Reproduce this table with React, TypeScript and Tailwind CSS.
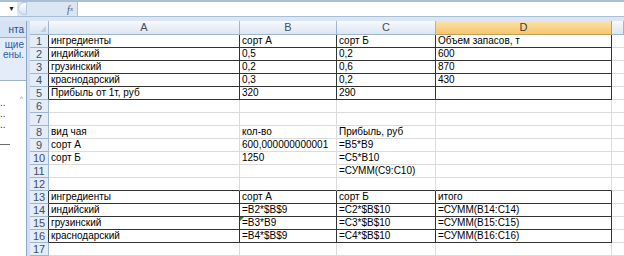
import React from "react";

type Row = {
  cells: string[];
  boxed?: boolean;
};

const ROWS: Row[] = [
  { cells: ["ингредиенты", "сорт А", "сорт Б", "Объем запасов, т"], boxed: true },
  { cells: ["индийский", "0,5", "0,2", "600"], boxed: true },
  { cells: ["грузинский", "0,2", "0,6", "870"], boxed: true },
  { cells: ["краснодарский", "0,3", "0,2", "430"], boxed: true },
  { cells: ["Прибыль от 1т, руб", "320", "290", ""], boxed: true },
  { cells: ["", "", "", ""] },
  { cells: ["", "", "", ""] },
  { cells: ["вид чая", "кол-во", "Прибыль, руб", ""] },
  { cells: ["сорт А", "600,000000000001", "=B5*B9", ""] },
  { cells: ["сорт Б", "1250", "=C5*B10", ""] },
  { cells: ["", "", "=СУММ(C9:C10)", ""] },
  { cells: ["", "", "", ""] },
  { cells: ["ингредиенты", "сорт А", "сорт Б", "итого"], boxed: true },
  { cells: ["индийский", "=B2*$B$9", "=C2*$B$10", "=СУММ(B14:C14)"], boxed: true },
  { cells: ["грузинский", "=B3*B9", "=C3*$B$10", "=СУММ(B15:C15)"], boxed: true },
  { cells: ["краснодарский", "=B4*$B$9", "=C4*$B$10", "=СУММ(B16:C16)"], boxed: true },
  { cells: ["", "", "", ""] },
];

const COLS = ["A", "B", "C", "D"];
const WIDTHS = ["w-[191px]", "w-[97px]", "w-[99px]", "w-[176px]"];

function ColHeader({ label, width, active }: { label: string; width: string; active?: boolean }) {
  return (
    <div
      className={`${width} flex h-full shrink-0 items-center justify-center border-r border-b text-[11px] ${
        active
          ? "border-[#c5a05a] bg-gradient-to-b from-[#fbe2ae] to-[#f6c568] text-[#3c3c3c]"
          : "border-[#9eb6ce] bg-gradient-to-b from-[#f7f9fc] to-[#dde6f1] text-[#3d4f66]"
      }`}
    >
      {label}
    </div>
  );
}

export default function App() {
  return (
    <div className="h-[256px] w-[624px] overflow-hidden bg-white font-['Liberation_Sans',Arial,sans-serif] text-black">
      {/* formula bar */}
      <div className="flex h-[21px] flex-col border-t-[2px] border-[#a9bfd8] bg-[#dbe6f4]">
        <div className="flex h-[14px] items-stretch">
          <div className="flex w-[17px] items-center justify-end bg-white pr-[2px] text-[7px] text-[#222]">▼</div>
          <div className="ml-[1px] h-[13px] w-[9px] rounded-l-full border border-[#b7c8dc] bg-gradient-to-b from-white to-[#d7e2ef]" />
          <div className="flex w-[50px] items-center justify-end pr-[4px] font-['Liberation_Serif',serif] text-[10px] italic text-[#4d5b70]">
            f<span className="text-[7px]">x</span>
          </div>
          <div className="flex-1 border-l border-[#a9bfd8] bg-white" />
        </div>
        <div className="h-[1px] bg-[#a9bfd8]" />
      </div>

      <div className="flex">
        {/* task pane strip on the left */}
        <div className="flex w-[30px] shrink-0">
          <div className="flex w-[26px] flex-col bg-white">
            <div className="flex h-[17px] items-center justify-end overflow-hidden border-b border-[#9bb3d0] bg-[#d5e3f4] pr-[2px] text-[10px] whitespace-nowrap text-[#1d4c92]">
              нта
            </div>
            <div className="flex h-[40px] flex-col items-end overflow-hidden bg-[#e3ecf8] pt-[2px] pr-[2px] text-[10px] leading-[10px] whitespace-nowrap text-[#2860b0]">
              <span>щие</span>
              <span>ены.</span>
            </div>
            <div className="h-[3px] border-b border-[#9bb3d0] bg-[#e3ecf8]" />
            <div className="relative flex-1 bg-white">
              <span className="absolute top-[13px] right-[3px] text-[7px] text-[#7f8da0]">^</span>
              <div className="flex flex-col pt-[16px] text-[10px] leading-[11px] text-[#333]">
                <span>..</span>
                <span>..</span>
                <span>..</span>
              </div>
              <div className="mt-[14px] h-[1px] w-[10px] bg-[#6d6d6d]" />
            </div>
          </div>
          <div className="w-[4px] border-l border-[#8ea6c3] bg-[#d2deed]" />
        </div>

        {/* sheet */}
        <div className="flex flex-col">
          <div className="flex h-[14px]">
            <div className="relative h-full w-[19px] shrink-0 border-r border-b border-[#9eb6ce] bg-gradient-to-b from-[#f2f6fb] to-[#d9e3ef]">
              <div className="absolute right-[2px] bottom-[2px] h-0 w-0 border-t-[6px] border-l-[6px] border-t-transparent border-l-transparent border-r-0 border-b-0 [border-bottom-color:#c0cfe0] [border-right-color:#c0cfe0] [border-right-width:6px] [border-bottom-width:0px]" />
            </div>
            {COLS.map((c, i) => (
              <ColHeader key={c} label={c} width={WIDTHS[i]} active={c === "D"} />
            ))}
            <ColHeader label="" width="w-[12px]" />
          </div>

          {ROWS.map((row, r) => {
            const nextBoxed = ROWS[r + 1]?.boxed;
            return (
              <div key={r} className="flex h-[13px]">
                <div
                  className={`flex h-full w-[19px] shrink-0 items-center justify-center border-r border-b border-b-[#9eb6ce] bg-[#e4ecf7] text-[11px] text-[#3d4f66] ${
                    row.boxed ? "border-r-[#333]" : "border-r-[#9eb6ce]"
                  }`}
                >
                  {r + 1}
                </div>
                {row.cells.map((text, i) => {
                  const darkBottom = row.boxed || nextBoxed;
                  return (
                    <div
                      key={i}
                      className={`${WIDTHS[i]} relative flex h-full shrink-0 items-end overflow-visible border-r border-b pb-[1px] pl-[2px] text-[10px] leading-[11px] whitespace-nowrap ${
                        row.boxed ? "border-r-[#333]" : "border-r-[#dadcdd]"
                      } ${darkBottom ? "border-b-[#333]" : "border-b-[#dadcdd]"}`}
                    >
                      {r === 14 && i === 1 && (
                        <span className="absolute top-0 left-0 h-0 w-0 border-t-[4px] border-r-[4px] border-t-[#1f8a2e] border-r-transparent" />
                      )}
                      {text}
                    </div>
                  );
                })}
                <div className="h-full w-[12px] shrink-0 border-b border-[#dadcdd]" />
              </div>
            );
          })}
        </div>
      </div>
    </div>
  );
}
